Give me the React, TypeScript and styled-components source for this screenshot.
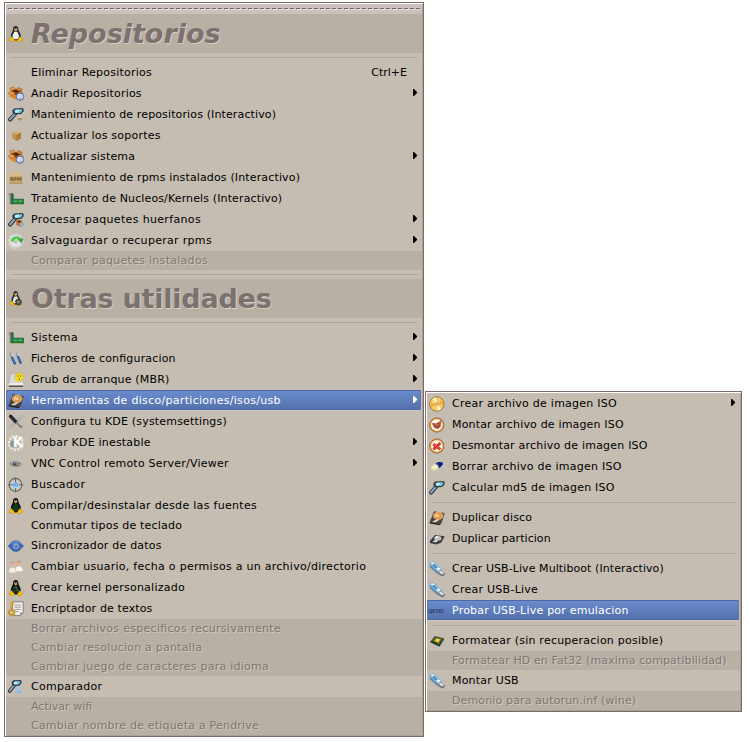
import React from 'react';
import styled, { createGlobalStyle, css } from 'styled-components';

const GlobalStyle = createGlobalStyle`
  html, body { margin: 0; padding: 0; background: #fff; }
  body { font-family: "DejaVu Sans", sans-serif; overflow: hidden; }
`;

const Desktop = styled.main`
  display: flex;
  align-items: flex-start;
  width: 750px;
  height: 742px;
  box-sizing: border-box;
  padding: 2px 0 0 4px;
  gap: 1px;
`;

const MenuPanel = styled.nav<{ $width: number; $top?: number }>`
  display: flex;
  flex-direction: column;
  box-sizing: border-box;
  width: ${p => p.$width}px;
  margin-top: ${p => p.$top ?? 0}px;
  border: 1px solid #7b6c67;
  background: #c5bdb1;
  box-shadow: inset 1px 1px 0 #fff, inset -1px -1px 0 #aaa195;
  padding: 1px;
`;

const Tearoff = styled.div`
  height: 10px;
  background: #cbc1bf;
  padding: 4px 2px 0;
  box-sizing: border-box;
`;

const Perforation = styled.div`
  height: 2px;
  background:
    repeating-linear-gradient(90deg, #6f6563 0 4px, transparent 4px 6px) 0 0 / 100% 1px no-repeat,
    repeating-linear-gradient(90deg, transparent 0 1px, #e9e3e1 1px 5px, transparent 5px 6px) 0 1px / 100% 1px no-repeat;
`;

const Heading = styled.h1<{ $italic?: boolean }>`
  display: flex;
  height: 39px;
  margin: 0;
  background: #b8b0a4;
  color: #7b7270;
  font-size: 27px;
  line-height: 39px;
  font-weight: bold;
  font-style: ${p => (p.$italic ? 'italic' : 'normal')};
  letter-spacing: ${p => (p.$italic ? 0 : -0.22)}px;
  text-shadow: 1px 1px 0 #d6cec2;
  white-space: nowrap;
`;

const Separator = styled.hr`
  flex: none;
  height: 1px;
  border: 0;
  margin: 4px 5px;
  background: #aea599;
`;

const Row = styled.div<{ $state: State; $short: boolean }>`
  display: flex;
  height: ${p => (p.$short ? 19 : 21)}px;
  line-height: ${p => (p.$short ? 19 : 21)}px;
  font-size: 11px;
  color: #000;
  ${p =>
    p.$state === 'disabled' &&
    css`
      background: #b8b0a4;
      color: #7f7673;
      text-shadow: 1px 1px 0 #d0c8bc;
    `}
  ${p =>
    p.$state === 'active' &&
    css`
      height: 20px;
      margin: 0 1px 1px 0;
      color: #fff;
      background: linear-gradient(#6b8dcf, #5370a8);
      border-radius: 2px;
      box-shadow: inset 0 1px 0 #4c69a5, inset 1px 0 0 #5878b8, inset -1px 0 0 #5878b8, inset 0 -1px 0 #4c69a5, 0 1px 0 #cfc8be;
    `}
`;

const IconSlot = styled.span<{ $top: number }>`
  flex: none;
  width: 23px;
  height: 16px;
  margin: ${p => p.$top}px 0 0 2px;
  svg { display: block; overflow: visible; }
`;

const Label = styled.span<{ $track: number }>`
  flex: 1;
  white-space: nowrap;
  letter-spacing: ${p => p.$track}px;
  font-feature-settings: "liga" 1;
`;

const Shortcut = styled.span`
  margin-right: 15px;
`;

const Arrow = styled.svg<{ $shift: number }>`
  flex: none;
  width: 4px;
  height: 7px;
  margin: 6px ${p => p.$shift}px 0 0;
  fill: currentColor;
`;

type State = 'normal' | 'disabled' | 'active';
type IconName = keyof typeof icons;

const Lens = () => (
  <>
    <path d="M7 7 2 12.6" stroke="#2c3440" strokeWidth="4" strokeLinecap="round" />
    <path d="M6.8 7 2.1 12.4" stroke="#8fa3c0" strokeWidth="2.1" strokeLinecap="round" />
    <path d="M4.4 3.2 6.2 1.4 14.6 1.1 15.8 2.3 15.4 4.4 13.2 7 6.8 7.4 4.6 6z" fill="#2f3a48" />
    <path d="M6.2 3.7 7.6 2.5 14.3 2.3 14.2 3.8 12.4 5.9 7.2 6.1z" fill="#74c9de" />
    <path d="M7 3.8 8.2 2.9 11.5 2.8 10 5.2 7.3 5.4z" fill="#c4eff5" />
  </>
);

const OpenBox = () => (
  <>
    <path d="M2 5 7.8 3 13.4 5 12.8 10.6 7.7 13.6 1.8 10.4z" fill="#c67823" />
    <path d="M2 5 7.8 7.3 7.7 13.6 1.8 10.4z" fill="#d98b31" />
    <path d="M2.8 5 7.8 3 13 5 8 9z" fill="#4f2807" />
    <path d="M3 4.8.2 7.5l4 2.2L7.5 7zM3.2 4.6 1.8 2.2 5.8 1 7.4 3.6z" fill="#e79c45" stroke="#9b581c" strokeWidth=".6" />
    <path d="M8.4 3.8 10 1.5l4.4 1.9L12.9 5.2zM8.5 7.4l4.5-2.5 2 2.5-4 2z" fill="#d98b36" stroke="#985419" strokeWidth=".6" />
  </>
);

const Wheel = () => (
  <>
    <circle cx="12" cy="10.7" r="3.7" fill="#a2b5dd" stroke="#5c72a8" />
    <path d="M10 11.7a2.2 2.2 0 1 1 3.8.3M10.3 12.4 12.3 10.2" stroke="#eef4ff" strokeWidth="1.1" />
  </>
);

const Penguin = ({ body, belly }: { body: string; belly: string }) => (
  <>
    <path d="M5 3.2C5 1 6 0 7.7 0s2.7 1.1 2.7 3.2c0 2 2.4 3.8 2.4 7 0 3-2 4.3-5.1 4.3S2.8 13 2.8 10.2C2.8 7.2 5 5.2 5 3.2z" fill={body} />
    <path d="M6.4 5.5c1 .6 1.7.6 2.7-.1.8 1.6 2 3.2 1.8 5-.2 2-1.3 2.8-3.3 2.8-2.1 0-3-.8-3.1-2.8 0-1.8 1.2-3.2 1.9-4.9z" fill={belly} />
    <path d="M6 3.8 7.8 3l1.8.9-1.9 1.5z" fill="#edb529" />
    <path d="M6.3 2.2h.9v1h-.9zM8.3 2.2h.9v1h-.9z" fill="#eee" />
    <path d="M3.6 10.5 6.5 14c.2 1.4-1 1.8-2.6 1.5l-3-1.1 1-2.5zM11.7 10.5l3 2.6-.5 1.3-2.7 1.5c-1.6.3-2.4-.6-2-2z" fill="#f2bd13" stroke="#b87b0b" strokeWidth=".4" />
  </>
);

const Disk = () => (
  <>
    <path d="M5 1.2 15.4 3 11.5 13.8.7 12z" fill="#4b443d" />
    <path d="M.7 12 11.5 13.8l-.7 1.4-10-1.7zM11.5 13.8 15.4 3v1.8l-3.6 10z" fill="#252422" />
    <ellipse cx="9.2" cy="5.8" rx="4.9" ry="3.7" fill="#e0984a" stroke="#e9bd80" strokeWidth=".7" />
    <path d="M5.5 7.6 9.2 5.8 7 2.9z" fill="#ffce85" />
    <circle cx="9.2" cy="5.8" r="1" fill="#f5ead8" />
    <path d="M3 11.6 8.8 8.9l1.4 1.2-3.8 2.4z" fill="#d8d3cc" />
  </>
);

const Disc = () => (
  <>
    <circle cx="7.8" cy="8" r="7.2" fill="#f9cb66" stroke="#a1773f" />
    <path d="M7.8 8 3.4 3.2A6.5 6.5 0 0 1 7 1.5zM7.8 8l4.4 4.8a6.5 6.5 0 0 1-3.6 1.7z" fill="#fff3c8" />
    <path d="m7.8 8 5.6-3.4a6.5 6.5 0 0 1 .9 4zM7.8 8 2.2 11.4a6.5 6.5 0 0 1-.9-4z" fill="#f2ac35" />
    <circle cx="7.8" cy="8" r="1.8" fill="#b99b6c" />
    <circle cx="7.8" cy="8" r=".8" fill="#e0d9cc" />
  </>
);

const RingDisc = () => (
  <>
    <circle cx="7.8" cy="8" r="7.1" fill="#f0a545" stroke="#94693c" />
    <circle cx="7.8" cy="8" r="5.7" fill="#fff7ec" />
  </>
);

const Gear = ({ fill, edge }: { fill: string; edge: string }) => (
  <>
    <circle cx="7.8" cy="8" r="6.8" stroke={edge} strokeWidth="2.4" strokeDasharray="2.1 1.4" />
    <circle cx="7.8" cy="8" r="6" fill={fill} stroke={edge} strokeWidth=".6" />
  </>
);

const Usb = () => (
  <>
    <path d="M.4 1.2 4 .2 6.6 2 12.8 8.2 11.5 12.2 8.8 13 .9 6z" fill="#74a3c6" />
    <path d="M1.2 1.7 4.2 1 12 8.2 9.4 10z" fill="#dcf2fa" />
    <path d="M3 3.8 5.4 2.8 9.2 6.4 6.8 7.6z" fill="#3f95d0" />
    <path d="m.9 5.5 7.9 7 2.6-.7" stroke="#56708a" />
    <path d="m11.3 8.8 4.6 3.1-.4 2.4-2.6 1.2-4.2-3z" fill="#70777e" />
    <path d="m11.6 9.6 3.6 2.4-2.3 1.4-3.1-2.5z" fill="#dfe1e2" />
  </>
);

const Card = () => (
  <>
    <path d="M.8 2h3v2l-.7.3V13H1.6V5H.8z" fill="#8b9091" />
    <path d="M3.3 2.8h1.9v5.4h10.2v4.8H3.3z" fill="#1d8440" stroke="#0e562b" strokeWidth=".7" />
    <path d="M6 9.4h3V11H6zM10.6 9.4H14V11h-3.4z" fill="#5fb26c" />
    <path d="M4.8 12.9h9.8v1H4.8z" fill="#b9a968" />
    <path d="M1 2.5h1.2v2M1 12.2h1.5" stroke="#dd6a4c" strokeWidth=".8" />
  </>
);

const icons = {
  tux: <Penguin body="#262a2e" belly="#f2f2f2" />,
  tuxGear: (
    <>
      <g transform="translate(1 0) scale(.86 .94)"><Penguin body="#292a2b" belly="#eceae5" /></g>
      <circle cx="10.4" cy="11" r="2.9" fill="#55574c" stroke="#343731" strokeWidth="1.2" strokeDasharray="1.4 .8" />
      <circle cx="10.4" cy="11" r="1" fill="#999b84" />
    </>
  ),
  tuxGreen: <Penguin body="#0d120e" belly="#16351e" />,
  tuxKernel: (
    <>
      <Penguin body="#0d120e" belly="#183625" />
      <path d="M7.2 7.2h1.8M8.6 9.5l1.8 1.2" stroke="#8da096" strokeWidth=".8" />
    </>
  ),
  boxes: (<><OpenBox /><Wheel /></>),
  lensBase: (
    <>
      <Lens />
      <path d="M9 12 12 10.8l2.8 1.3-2.6 1.6z" fill="#b58d4e" />
      <path d="M10.8 8.6h2.6v2h-2.6z" fill="#dccbad" />
    </>
  ),
  lensBox: (
    <>
      <Lens />
      <path d="m8.2 9 3-1.3L14.3 9v3.8L11 14.6l-2.8-1.8z" fill="#c57528" />
      <path d="m8.7 9.2 2.5-.8 2.5 1-2.4 1.4z" fill="#552a0c" />
      <circle cx="13.3" cy="12.4" r="1.9" fill="#a6b8dc" stroke="#657bac" strokeWidth=".6" />
    </>
  ),
  lensBlue: (
    <>
      <g transform="scale(.86 .95)"><Lens /></g>
      <path d="M7.3 8.3 10.8 7.7 12 10l-1 2.2 3 .3-1.2 1.7-4.5-.5 1.3-3z" fill="#7fb6ec" />
      <path d="m8.6 9 1.9-.4.6 1.6-1 2.3" stroke="#c4e1ff" strokeWidth=".8" />
    </>
  ),
  lens: <Lens />,
  cube: (
    <>
      <path d="M4 4.6 8.5 3l4.7 1.5-.5 6L8.6 13 4.4 10.6z" fill="#c09350" />
      <path d="M4 4.6 8.5 3l4.7 1.5-4.6 2z" fill="#dcbd86" />
      <path d="M8.6 6.5 13.2 4.5l-.5 6L8.6 13z" fill="#a87b3b" />
      <path d="m7.6 3.6 1.8-.2 1 .4-2 2.4-1.5-.5z" fill="#cdae74" />
    </>
  ),
  rpm: (
    <>
      <path d="M1.3 6 3.6 2 11.8 1.8 14.4 6v7.8H1.3z" fill="#c9ab74" />
      <path d="M1.3 6h13.1L11.8 1.8 3.6 2z" fill="#d5bd8c" />
      <path d="M1.3 12.4h13.1v1.4H1.3z" fill="#b4935a" />
      <text x="1.9" y="11.2" fontSize="5" fontWeight="bold" textLength="12" lengthAdjust="spacingAndGlyphs" fill="#745631">RPM</text>
    </>
  ),
  card: <Card />,
  restore: (
    <>
      <Gear fill="#e2e4e4" edge="#d4d6d7" />
      <path d="M4.2 8.6A4.2 4.2 0 0 1 12 6.6" stroke="#48c940" strokeWidth="2.6" />
      <path d="m9.2 6.6 6.2-1.6-1.6 5.2z" fill="#36ae31" />
      <circle cx="7.8" cy="8.8" r="1.9" fill="#b9bfbf" />
    </>
  ),
  drivers: (
    <>
      <path d="M3 1.4 2.4 4l1.4 2.6M9.3 1.8 8.6 4.1l1 2" stroke="#9a9fa6" strokeWidth="1.5" />
      <path d="M4.6 2.2 5.4 4.4M10.9 2.4l.7 2.2" stroke="#e4e5e5" />
      <path d="m4.2 7 2.6 5.4M10.2 6.2l2.4 5.4" stroke="#275da1" strokeWidth="2.5" strokeLinecap="round" />
      <path d="m4.4 7.2 2.2 4.4M10.4 6.6l2 4.2" stroke="#5d94d4" strokeWidth=".7" />
    </>
  ),
  grub: (
    <>
      <path d="M2.6 1.8h10.8l1.8 9.3v3.2H.8v-3.2z" fill="#d9d9d7" stroke="#a9a8a4" strokeWidth=".6" />
      <path d="M.8 11.2h14.4v2.4H.8z" fill="#ececea" />
      <path d="M1 14.2h14" stroke="#4a4947" strokeWidth="1.4" />
      <circle cx="11.2" cy="5.2" r="4.2" fill="#f8df25" stroke="#d2ae10" strokeWidth=".6" />
      <path d="M9.9 3.4v1.4M12.5 3.4v1.4" stroke="#5d4b08" />
      <circle cx="11.2" cy="7" r=".8" fill="#6f5909" />
    </>
  ),
  disk: <Disk />,
  wrenches: (
    <>
      <path d="m14.2 1.6-6.6 6.4-5.2 5.6M12.6 11.8l2 1.2" stroke="#92908e" strokeWidth="1.9" />
      <path d="m14 1.8-6.6 6.4-5 5.4" stroke="#e9e8e5" strokeWidth=".9" />
      <path d="m2.6 2.4 5 5.2" stroke="#1d2022" strokeWidth="3.4" strokeLinecap="round" />
      <path d="m8 8 5.4 5.7" stroke="#777a79" strokeWidth="1.6" />
      <path d="m2.2 2.8 3.6 3.8" stroke="#565a5b" strokeWidth=".6" />
    </>
  ),
  kde: (
    <>
      <Gear fill="#b9b6af" edge="#ecebe6" />
      <circle cx="5.4" cy="9" r="3.4" fill="#99968f" />
      <text x="10" y="12" fontSize="13.5" fontWeight="bold" textAnchor="middle" fill="#fff">K</text>
    </>
  ),
  vnc: (
    <>
      <path d="M1.2 7.6C3.5 4.8 9.5 4.3 12 7l1.7.9-.5 1.7-2.4.3C8.2 11.6 3.5 11 1.2 7.6z" fill="#74767a" />
      <ellipse cx="6.3" cy="7.5" rx="3.9" ry="1.9" fill="#a9acb1" />
      <ellipse cx="6.6" cy="7.8" rx="2.1" ry="1.5" fill="#3e4145" />
      <path d="M6 7.2h1.2M11 8.5h1.6" stroke="#dcdddd" strokeWidth=".8" />
    </>
  ),
  target: (
    <>
      <circle cx="7.5" cy="7.8" r="6.4" fill="#d2d5d2" fillOpacity=".5" stroke="#5d6461" strokeWidth="1.1" />
      <path d="M7.5.3V5M7.5 11v4.4M.1 7.8h4.5M10.8 7.8h4.4" stroke="#59605e" strokeWidth=".9" />
      <path d="M5.1 6.2h1.2l.4-1h2l.4 1h1v5h-5z" fill="#6caef0" />
      <path d="M5.4 9.5h4.4v1.6H5.4z" fill="#a8d4ff" />
    </>
  ),
  sync: (
    <>
      <path d="M.1 8 3 5.2C5 2 10.6 2 12.7 5.2L15.7 8l-3 2.9c-2.1 3.4-7.7 3.4-9.7 0z" fill="#3f6cb8" stroke="#2c5294" strokeWidth=".5" />
      <path d="M4 5.4c2.2-2 5.6-2 7.6 0" stroke="#6c97da" strokeWidth="1.2" />
      <circle cx="7.9" cy="8.1" r="2.9" fill="#93a7c6" />
      <circle cx="7.9" cy="8.1" r="1.5" fill="#46597a" />
      <path d="M7.2 7.2h1.2" stroke="#dbe4f2" />
    </>
  ),
  users: (
    <>
      <path d="M.9 13.8C.8 10 2 8.7 4.2 8.4s4 1.7 3.8 5.4z" fill="#f3eee8" stroke="#c9c1b8" strokeWidth=".5" />
      <path d="M7.3 12.2c0-3.8 1.7-5 3.6-5.1 2.6 0 4 2 3.9 5.5z" fill="#fbf8f3" stroke="#c9c1b8" strokeWidth=".5" />
      <ellipse cx="4.3" cy="5.8" rx="2.1" ry="2.5" fill="#e5b496" />
      <ellipse cx="11" cy="4.3" rx="2.1" ry="2.6" fill="#e5b291" />
      <path d="M2.2 5.2c0-1.8.9-2.6 2.3-2.6 1.3 0 2 .8 1.9 1.7L3.6 4.4zM9 3.8c0-1.9 1-2.6 2.4-2.5 1.6.2 1.9 1.5 1.8 3.6L12 3.4z" fill="#c6a484" />
    </>
  ),
  script: (
    <>
      <path d="M4.5.8h10.7v10.8l-3 3H4.5z" fill="#efefed" stroke="#77756f" strokeWidth=".9" />
      <path d="M6.5 4h6.5M6.5 6.2h6.5M6.5 8.4h6.5M6.5 10.5h4" stroke="#95938e" strokeWidth=".9" />
      <path d="M15.2 11.6h-3v3z" fill="#8f8e8a" />
      <path d="M3.5 1v8M3.5 1.6h3M3.5 4h2" stroke="#d6a229" strokeWidth="1.7" />
      <circle cx="3.7" cy="11.5" r="2.7" stroke="#c8952a" strokeWidth="1.8" />
      <circle cx="3.7" cy="11.5" r="1.3" fill="#e6cf91" />
    </>
  ),
  cd: <Disc />,
  cdMount: (
    <>
      <RingDisc />
      <path d="M3 6.6 4.6 5.8 6.6 6.8 9.5 5l2.6.3-.6 4.6-2.8 2L5.2 10.8z" fill="#a84c39" />
      <path d="m3.4 6.6 2.6.8 3.6-1-1.6 2.4z" fill="#d27259" />
      <path d="m9.8 5.2 2-1.8.8 1.8z" fill="#cf2b20" />
    </>
  ),
  cdUnmount: (
    <>
      <RingDisc />
      <path d="m4.2 6 7.2 5.4M11.4 5 4.4 11.4" stroke="#d8352a" strokeWidth="2.9" />
      <path d="m4.6 5.8 6.2 4.6" stroke="#ee7766" strokeWidth=".8" />
    </>
  ),
  eraser: (
    <>
      <path d="M6.6 4.2 9.4 3l4 .2.6 2-2.9 3.4-2.3.2z" fill="#0b1d86" />
      <path d="M2.6 7.6 6 5l3 1.6.6 2.6-3.2 2.6-3 .2-1.4-1.8z" fill="#f1f0bd" />
      <path d="m2 10.2 3.8.2 3.6-1.2-3 2.6-3 .2z" fill="#cfcf9f" />
      <path d="M6.8 4.4 9.2 6.4l.2 2" stroke="#7f92b4" strokeWidth=".9" />
    </>
  ),
  partition: (
    <>
      <path d="M1.2 9.4 6 4 15.7 5.2 12.4 11.4 7.5 13.6.8 12z" fill="#3b3b40" />
      <ellipse cx="8.8" cy="7.2" rx="3.6" ry="2.5" fill="#bdbab9" />
      <path d="m5.6 7 3.2-2.4.2 2.6z" fill="#fff" />
      <path d="M3.4 10.4 7 11.4l2.4-1.8-2.6-.8z" fill="#d9d7d5" />
    </>
  ),
  usb: <Usb />,
  qemu: (
    <text x="-.5" y="9.6" fontSize="6.2" textLength="16" lengthAdjust="spacingAndGlyphs" fill="#2b3a5a" fontFamily="Liberation Serif, serif" fontWeight="bold">QEMU</text>
  ),
  chip: (
    <>
      <path d="M1 9 5.8 3l9.2 2.2-4.6 8.2z" fill="#3b5c33" />
      <path d="m1 9 9.4 4.4V12L3 8.4zM15 5.2l-4.6 6.8v1.4L15 6.6z" fill="#1d311c" />
      <path d="m4.6 8 2.6-3.2 5.2 1.3-2.8 4.2z" fill="#a8801f" />
      <path d="m5.9 7.8 1.8-2.2 3.4.8-1.8 2.8z" fill="#ffd24a" />
    </>
  ),
};

const Glyph = ({ name, top = 3 }: { name?: IconName; top?: number }) => (
  <IconSlot $top={top}>
    {name && (
      <svg width="16" height="16" viewBox="0 0 16 16" fill="none">
        {icons[name]}
      </svg>
    )}
  </IconSlot>
);

interface Entry {
  text: string;
  track: number;
  icon?: IconName;
  state?: State;
  submenu?: boolean;
  shortcut?: string;
  short?: boolean;
}
type Item = Entry | 'separator';

const repositories: Item[] = [
  { text: 'Eliminar Repositorios', track: 0.23, shortcut: 'Ctrl+E' },
  { text: 'Anadir Repositorios', track: 0.21, icon: 'boxes', submenu: true },
  { text: 'Mantenimiento de repositorios (Interactivo)', track: 0.13, icon: 'lensBase' },
  { text: 'Actualizar los soportes', track: 0.22, icon: 'cube' },
  { text: 'Actualizar sistema', track: 0.17, icon: 'boxes', submenu: true },
  { text: 'Mantenimiento de rpms instalados (Interactivo)', track: 0.145, icon: 'rpm' },
  { text: 'Tratamiento de Nucleos/Kernels (Interactivo)', track: 0.13, icon: 'card' },
  { text: 'Procesar paquetes huerfanos', track: 0.34, icon: 'lensBox', submenu: true },
  { text: 'Salvaguardar o recuperar rpms', track: 0.305, icon: 'restore', submenu: true },
  { text: 'Comparar paquetes instalados', track: 0.285, state: 'disabled' },
];

const utilities: Item[] = [
  { text: 'Sistema', track: 0.4, icon: 'card', submenu: true },
  { text: 'Ficheros de configuracion', track: 0.175, icon: 'drivers', submenu: true },
  { text: 'Grub de arranque (MBR)', track: 0.18, icon: 'grub', submenu: true },
  { text: 'Herramientas de disco/particiones/isos/usb', track: 0.3, icon: 'disk', submenu: true, state: 'active' },
  { text: 'Configura tu KDE (systemsettings)', track: 0.18, icon: 'wrenches' },
  { text: 'Probar KDE inestable', track: 0.2, icon: 'kde', submenu: true },
  { text: 'VNC Control remoto Server/Viewer', track: 0.23, icon: 'vnc', submenu: true },
  { text: 'Buscador', track: 0.38, icon: 'target' },
  { text: 'Compilar/desinstalar desde las fuentes', track: 0.305, icon: 'tuxGreen' },
  { text: 'Conmutar tipos de teclado', track: 0.19, short: true },
  { text: 'Sincronizador de datos', track: 0.21, icon: 'sync' },
  { text: 'Cambiar usuario, fecha o permisos a un archivo/directorio', track: 0.275, icon: 'users' },
  { text: 'Crear kernel personalizado', track: 0.24, icon: 'tuxKernel' },
  { text: 'Encriptador de textos', track: 0.13, icon: 'script' },
  { text: 'Borrar archivos especificos recursivamente', track: 0.295, state: 'disabled' },
  { text: 'Cambiar resolucion a pantalla', track: 0.225, state: 'disabled' },
  { text: 'Cambiar juego de caracteres para idioma', track: 0.245, state: 'disabled' },
  { text: 'Comparador', track: 0.3, icon: 'lensBlue' },
  { text: 'Activar wifi', track: 0.02, state: 'disabled' },
  { text: 'Cambiar nombre de etiqueta a Pendrive', track: 0.2, state: 'disabled' },
];

const diskTools: Item[] = [
  { text: 'Crear archivo de imagen ISO', track: 0.25, icon: 'cd', submenu: true },
  { text: 'Montar archivo de imagen ISO', track: 0.17, icon: 'cdMount' },
  { text: 'Desmontar archivo de imagen ISO', track: 0.21, icon: 'cdUnmount' },
  { text: 'Borrar archivo de imagen ISO', track: 0.25, icon: 'eraser' },
  { text: 'Calcular md5 de imagen ISO', track: 0.2, icon: 'lens' },
  'separator',
  { text: 'Duplicar disco', track: 0.16, icon: 'disk' },
  { text: 'Duplicar particion', track: 0.05, icon: 'partition' },
  'separator',
  { text: 'Crear USB-Live Multiboot (Interactivo)', track: 0.075, icon: 'usb' },
  { text: 'Crear USB-Live', track: 0.26, icon: 'usb' },
  { text: 'Probar USB-Live por emulacion', track: 0.215, icon: 'qemu', state: 'active' },
  'separator',
  { text: 'Formatear (sin recuperacion posible)', track: 0.235, icon: 'chip' },
  { text: 'Formatear HD en Fat32 (maxima compatibilidad)', track: 0.11, state: 'disabled' },
  { text: 'Montar USB', track: 0.2, icon: 'usb' },
  { text: 'Demonio para autorun.inf (wine)', track: 0.14, state: 'disabled' },
];

const MenuItems = ({ items }: { items: Item[] }) => (
  <>
    {items.map((item, i) => {
      if (item === 'separator') return <Separator key={i} />;
      const state = item.state ?? 'normal';
      return (
        <Row key={item.text} $state={state} $short={state === 'disabled' || !!item.short}>
          <Glyph name={item.icon} />
          <Label $track={item.track}>{item.text}</Label>
          {item.shortcut && <Shortcut>{item.shortcut}</Shortcut>}
          {item.submenu && (
            <Arrow $shift={state === 'active' ? 4 : 5} viewBox="0 0 4 7">
              <path d="M0 0h1l3 3v1L1 7H0z" />
            </Arrow>
          )}
        </Row>
      );
    })}
  </>
);

export default function App() {
  return (
    <>
      <GlobalStyle />
      <Desktop>
        <MenuPanel $width={420}>
          <Tearoff><Perforation /></Tearoff>
          <Heading $italic><Glyph name="tux" top={12} />Repositorios</Heading>
          <Separator />
          <MenuItems items={repositories} />
          <Separator />
          <Heading><Glyph name="tuxGear" top={12} />Otras utilidades</Heading>
          <Separator />
          <MenuItems items={utilities} />
        </MenuPanel>
        <MenuPanel $width={317} $top={389}>
          <MenuItems items={diskTools} />
        </MenuPanel>
      </Desktop>
    </>
  );
}
